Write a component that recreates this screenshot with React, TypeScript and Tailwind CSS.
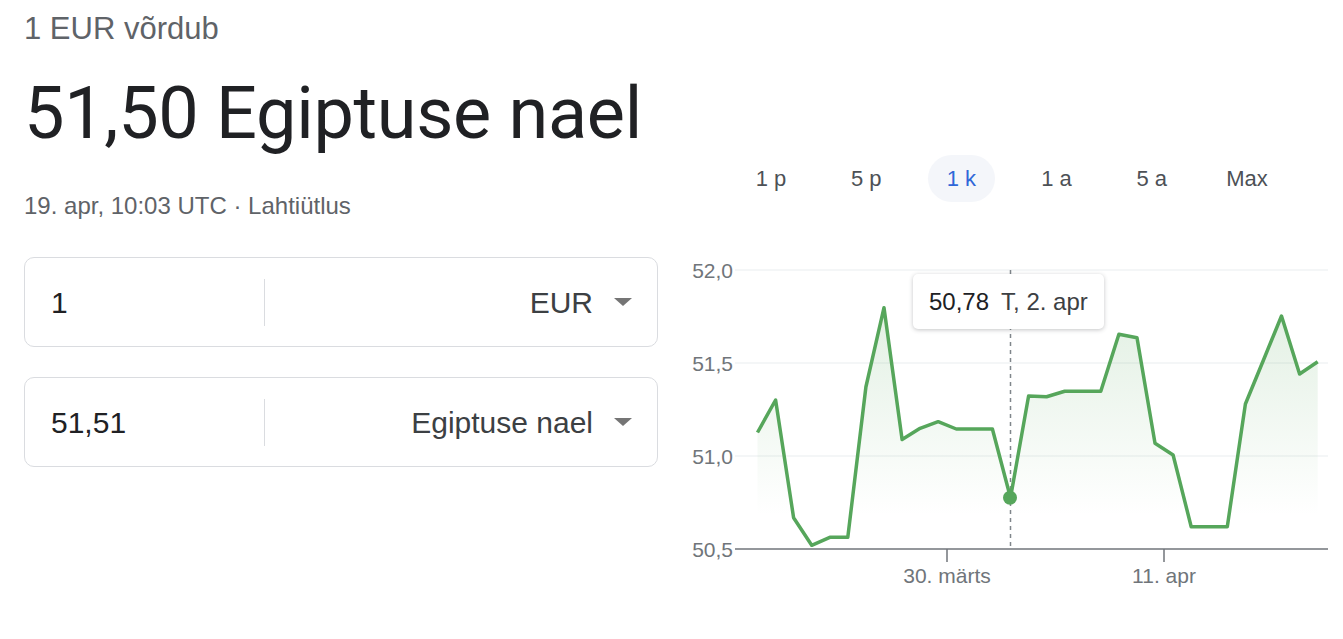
const ranges = ['1 p', '5 p', '1 k', '1 a', '5 a', 'Max']

const ys = [192.5, 160, 277.7, 305.3, 297.3, 297.3, 147, 67.7, 199.5, 188.3, 181.7, 189, 189, 189, 257.7, 156, 156.7, 151.3, 151.3, 151.3, 94.3, 97.7, 203.3, 215, 286.7, 286.7, 286.7, 164, 120, 76, 134, 121.7]
const pts = ys.map((y, i) => [77.5 + 18.07 * i, y] as const)
const linePath = pts.map(([x, y], i) => `${i ? 'L' : 'M'}${x.toFixed(1)} ${y}`).join(' ')
const areaPath = `${linePath} L${pts[pts.length - 1][0].toFixed(1)} 309 L77.5 309 Z`

const grid = [
  { y: 30, label: '52,0' },
  { y: 123, label: '51,5' },
  { y: 216, label: '51,0' },
]

function Caret() {
  return (
    <svg width="18" height="8" viewBox="0 0 18 8" className="shrink-0">
      <polygon points="0,0 18,0 9,8" fill="#757575" />
    </svg>
  )
}

function CurrencyBox({ value, currency }: { value: string; currency: string }) {
  return (
    <div className="h-[90px] border border-[#dadce0] rounded-[10px] flex items-center">
      <div className="w-[239px] pl-[26px] text-[30px] text-[#202124]">{value}</div>
      <div className="w-px h-[47px] bg-[#dadce0]" />
      <div className="flex-1 flex items-center justify-end gap-[21px] pr-[25px] text-[30px] text-[#3c4043]">
        <span>{currency}</span>
        <Caret />
      </div>
    </div>
  )
}

export default function App() {
  return (
    <div className="w-[1343px] h-[639px] bg-white flex overflow-hidden" style={{ fontFamily: '"Liberation Sans", Arial, sans-serif' }}>
      <div className="w-[634px] ml-6 shrink-0">
        <div className="pt-[11px] text-[31px] leading-[36px] text-[#5f6368]">1 EUR võrdub</div>
        <h1 className="mt-[31px] text-[72px] leading-[72px] text-[#202124] tracking-[-0.3px]" style={{ fontFamily: 'Roboto, sans-serif' }}>
          51,50 Egiptuse nael
        </h1>
        <div className="mt-[44px] text-[24px] leading-[24px] text-[#5f6368]">19. apr, 10:03 UTC · Lahtiütlus</div>
        <div className="mt-[39px] flex flex-col gap-[30px]">
          <CurrencyBox value="1" currency="EUR" />
          <CurrencyBox value="51,51" currency="Egiptuse nael" />
        </div>
      </div>

      <div className="ml-[22px] flex-1">
        <div className="pt-[155px] pl-[57.5px] flex gap-[28.2px]">
          {ranges.map(r => (
            <div
              key={r}
              className={
                r === '1 k'
                  ? 'w-[67px] h-[47px] rounded-full flex items-center justify-center text-[22px] bg-[#f4f6fa] text-[#2f67d8]'
                  : 'w-[67px] h-[47px] rounded-full flex items-center justify-center text-[22px] text-[#4d5156]'
              }
            >
              {r}
            </div>
          ))}
        </div>

        <div className="relative mt-[38px] w-[663px] h-[360px]">
          <svg width="663" height="360" viewBox="0 0 663 360" className="block">
            <defs>
              <linearGradient id="fill" x1="0" y1="67" x2="0" y2="275" gradientUnits="userSpaceOnUse">
                <stop offset="0" stopColor="#56a65b" stopOpacity="0.17" />
                <stop offset="1" stopColor="#56a65b" stopOpacity="0" />
              </linearGradient>
            </defs>
            {grid.map(g => (
              <g key={g.label}>
                <line x1="55" x2="648" y1={g.y} y2={g.y} stroke="#f1f3f4" strokeWidth="1.5" />
                <text x="53" y={g.y + 7.5} textAnchor="end" fontSize="21" fill="#70757a">{g.label}</text>
              </g>
            ))}
            <path d={areaPath} fill="url(#fill)" />
            <line x1="330.5" x2="330.5" y1="30" y2="309" stroke="#80868b" strokeWidth="1.5" strokeDasharray="4 4" />
            <path d={linePath} fill="none" stroke="#56a65b" strokeWidth="3.5" strokeLinejoin="round" />
            <circle cx="330" cy="257.7" r="7" fill="#56a65b" />
            <line x1="55" x2="648" y1="309" y2="309" stroke="#70757a" strokeWidth="1.5" />
            <text x="53" y="316.5" textAnchor="end" fontSize="21" fill="#70757a">50,5</text>
            <line x1="267" x2="267" y1="309" y2="322" stroke="#70757a" strokeWidth="1.5" />
            <line x1="484" x2="484" y1="309" y2="322" stroke="#70757a" strokeWidth="1.5" />
            <text x="267" y="343" textAnchor="middle" fontSize="21" fill="#70757a">30. märts</text>
            <text x="484" y="343" textAnchor="middle" fontSize="21" fill="#70757a">11. apr</text>
          </svg>

          <div className="absolute left-[233px] top-[34px] w-[191px] h-[55px] bg-white rounded-[5px] shadow-[0_1px_4px_rgba(60,64,67,0.3)] flex items-center pl-4 gap-3 text-[24px] whitespace-nowrap">
            <span className="text-[#202124]">50,78</span>
            <span className="text-[#3c4043]">T, 2. apr</span>
          </div>
        </div>
      </div>
    </div>
  )
}
